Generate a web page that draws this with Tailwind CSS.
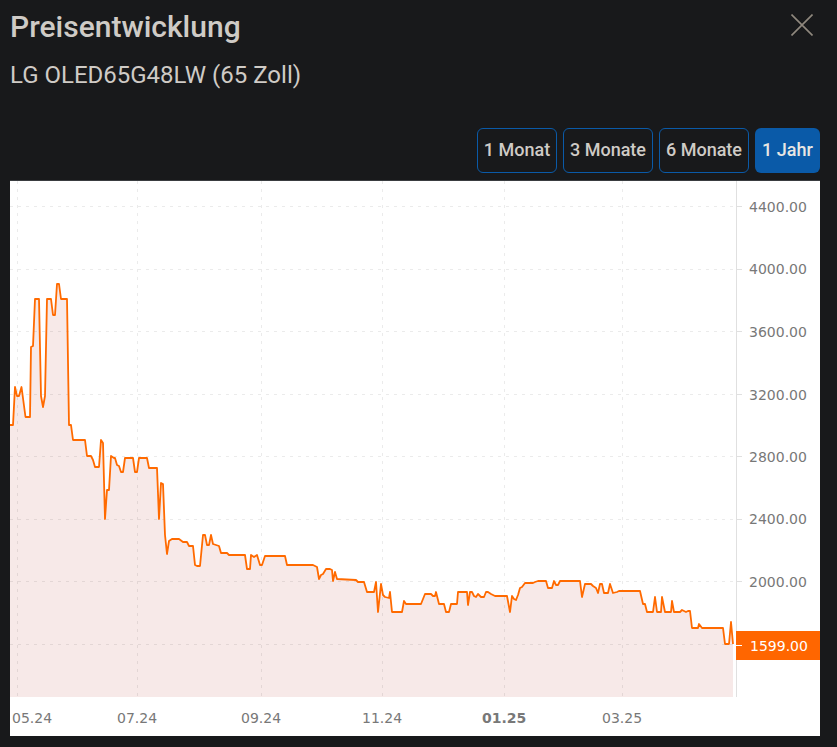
<!DOCTYPE html>
<html lang="de">
<head>
    <meta charset="UTF-8">
    <title>Preisentwicklung</title>
    <script src="https://cdn.jsdelivr.net/npm/@tailwindcss/browser@4"></script>
</head>
<body class="bg-[#18191b] font-['Roboto',sans-serif] w-[837px] h-[747px] overflow-hidden">
    <div class="pl-[10px] pr-[17px] pt-[9px]">
        <div class="flex justify-between items-start h-[41px]">
            <h1 class="text-[30px] leading-[36px] font-medium text-[#cfcbc6]">Preisentwicklung</h1>
            <button class="mt-[5px] mr-[7px] w-[22px] h-[22px] text-[#8f887e]">
                <svg viewBox="0 0 22 22" class="w-[22px] h-[22px]" fill="none" stroke="currentColor" stroke-width="1.6"><path d="M0.5 0.5L21.5 21.5M21.5 0.5L0.5 21.5"/></svg>
            </button>
        </div>
        <p class="text-[24px] leading-[32px] mt-[9px] text-[#cfcbc6]">LG OLED65G48LW (65 Zoll)</p>

        <div class="flex justify-end gap-[6px] mt-[37px]">
            <button class="w-[80px] h-[45px] pb-[2px] rounded-[6px] border border-[#0a5aa8] text-[18px] font-medium text-[#cfcbc6]">1 Monat</button>
            <button class="w-[90px] h-[45px] pb-[2px] rounded-[6px] border border-[#0a5aa8] text-[18px] font-medium text-[#cfcbc6]">3 Monate</button>
            <button class="w-[90px] h-[45px] pb-[2px] rounded-[6px] border border-[#0a5aa8] text-[18px] font-medium text-[#cfcbc6]">6 Monate</button>
            <button class="w-[65px] h-[45px] pb-[2px] rounded-[6px] bg-[#0a5aa8] text-[18px] font-medium text-[#e8e6e3]">1 Jahr</button>
        </div>

        <div class="mt-[7px] border-t border-[#3a3d40] bg-white w-[810px] h-[556px]">
            <svg width="810" height="555" viewBox="10 181 810 555" class="block font-['DejaVu_Sans',sans-serif] text-[14px]">
                <polygon id="area" fill="#f7e9e8"></polygon>

                <g stroke="#000" stroke-opacity="0.08" stroke-dasharray="3 5">
                    <path d="M17.5 181V697M137.5 181V697M261.5 181V697M382.5 181V697M504.5 181V697M622.5 181V697"/>
                    <path d="M10 206.5H736M10 269.5H736M10 331.5H736M10 394.5H736M10 456.5H736M10 519.5H736M10 581.5H736M10 644.5H736"/>
                </g>

                <path d="M736.5 181V697" stroke="#e0e0e0"/>
                <path d="M736 206.5h6M736 269.5h6M736 331.5h6M736 394.5h6M736 456.5h6M736 519.5h6M736 581.5h6" stroke="#e0e0e0"/>

                <polyline id="trace" fill="none" stroke="#ff6a00" stroke-width="1.8" stroke-linejoin="round"></polyline>

                <g class="fill-[#787878]">
                    <text x="749" y="212">4400.00</text>
                    <text x="749" y="274">4000.00</text>
                    <text x="749" y="337">3600.00</text>
                    <text x="749" y="400">3200.00</text>
                    <text x="749" y="462">2800.00</text>
                    <text x="749" y="524">2400.00</text>
                    <text x="749" y="587">2000.00</text>

                    <text x="12" y="723">05.24</text>
                    <text x="117" y="723">07.24</text>
                    <text x="241" y="723">09.24</text>
                    <text x="362" y="723">11.24</text>
                    <text x="482" y="723" class="font-bold">01.25</text>
                    <text x="602" y="723">03.25</text>
                </g>

                <rect x="736" y="631" width="84" height="29" fill="#ff6600"/>
                <path d="M736 645.5h6" stroke="#fff"/>
                <text x="750" y="651" class="fill-white">1599.00</text>
            </svg>
        </div>
    </div>

    <script>
        // price trace in chart pixels
        const pts = "10,425 13,425 15,387 17,396 19,396 21.5,387 25.5,417 30,417 31,347 33,346 35,299 39,299 41,396 43,407 45,396 47,299 51,299 53,315 55,315 57,284 59,284 61,299 67,299 69,425 71,425 73,440 85,440 87,456 91,456 93,460 95,467 99,467 101,440 103,443 105,519 107,490 109,490 111,456 114,458 115,458 117,465 119,466 121,472 123,472 125,458 133,458 135,472 137,472 139,458 147,458 149,468 157,468 159,519 161,483 163,484 165,535 167,554 169,541 172,539 179,539 183,542 187,542 189,546 193,546 195,565 197,566 200,566 203,535 205,535 207,545 209,545 211,535 213,544 219,546 221,553 227,553 229,555 245,555 247,569 250,569 251,555 254,557 257,555 260,565 262,565 265,556 285,556 287,565 313,565 317,567 319,579 321,575 323,574 326,569 330,569 332,570 333,581 335,572 337,579 356,580 358,582 364,582 367,592 374,592 376,582 378,612 381,584 383,595 385,597 389,598 390,592 392,612 402,612 404,601 406,604 421,604 425,594 431,594 433,596 435,596 436,592 439,604 444,604 446,612 449,612 451,604 457,604 458,592 467,592 468,605 470,592 472,592 474,596 476,597 478,594 481,597 484,597 486,592 488,592 491,594 495,596 507,596 510,612 512,596 514,599 516,600 518,595 520,588 522,587 525,583 533,583 535,582 538,581 546,581 548,588 552,588 554,581 556,585 558,585 560,581 580,581 582,597 585,584 591,584 593,586 596,588 598,593 600,584 602,584 604,593 608,593 610,584 613,593 617,592 619,591 640,591 643,604 645,604 647,612 653,612 655,597 657,612 661,612 662,597 665,612 671,612 672,601 674,612 680,612 682,610 684,611 686,612 688,611 690,611 692,628 698,628 699,624 702,628 723,628 725,644 729,644 731,622 733,644";
        document.getElementById('trace').setAttribute('points', pts);
        document.getElementById('area').setAttribute('points', pts + " 733,697 10,697");
    </script>
</body>
</html>
